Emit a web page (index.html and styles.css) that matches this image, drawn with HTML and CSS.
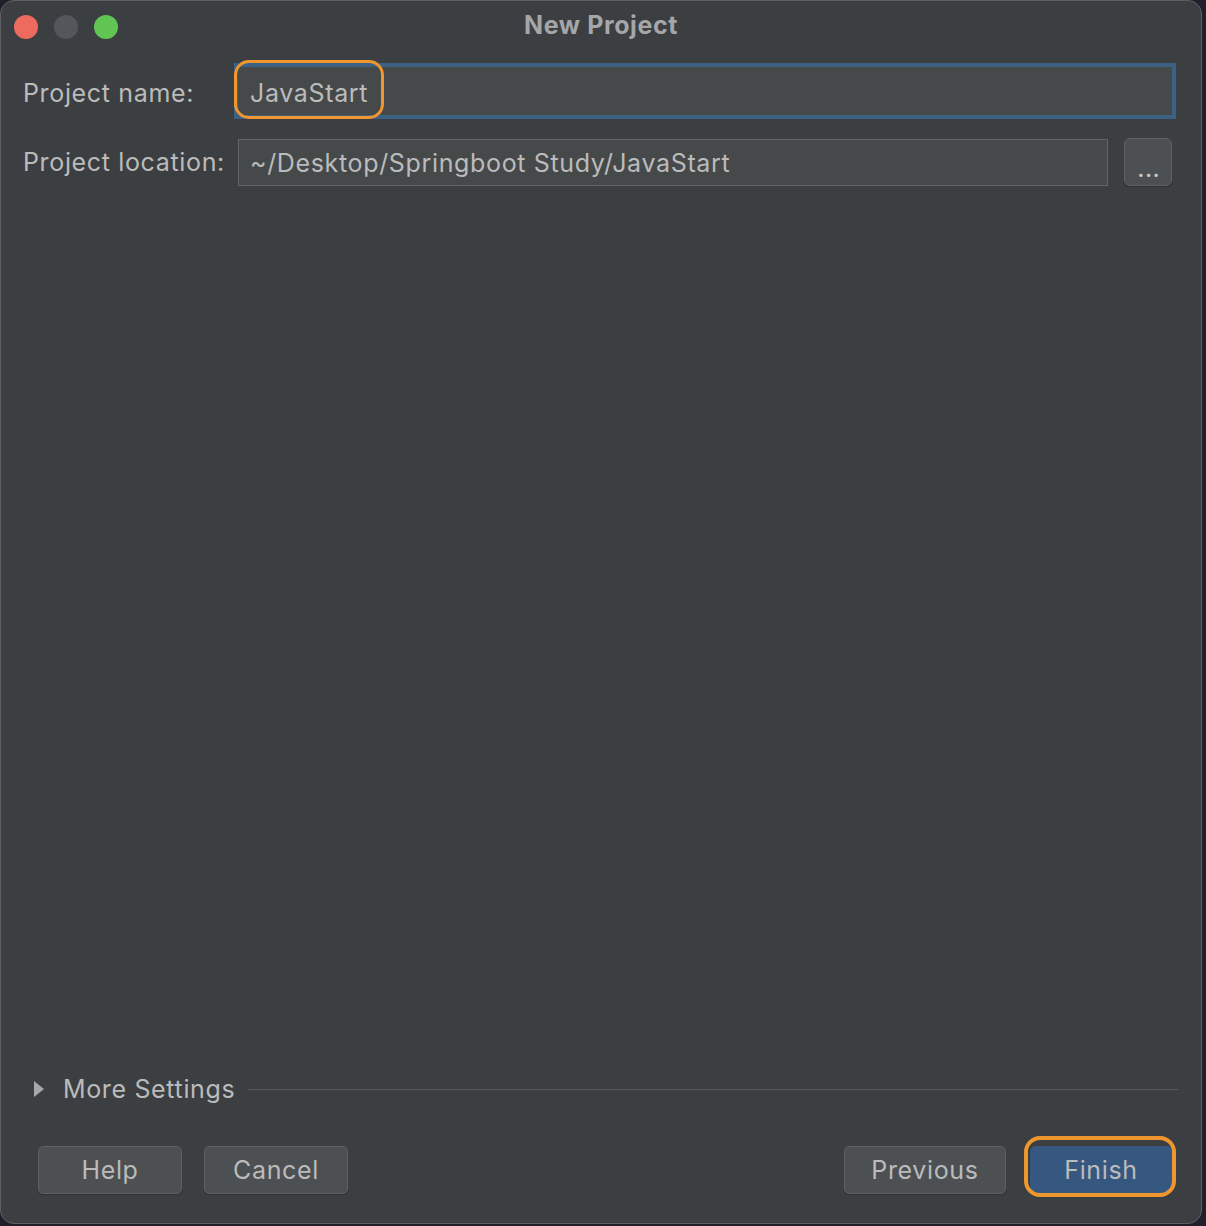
FILE: index.html
```html
<!DOCTYPE html>
<html>
<head>
<meta charset="UTF-8">
<title>New Project</title>
<link rel="stylesheet" href="styles.css">
</head>
<body>
	<div class="window">
		<div class="titlebar">
			<div class="lights">
				<span class="light close"></span>
				<span class="light idle"></span>
				<span class="light zoom"></span>
			</div>
			<div class="title">New Project</div>
		</div>
		<div class="form">
			<label class="label first">Project name:</label>
			<div class="field name">
				<span>JavaStart</span>
				<div class="mark"></div>
			</div>
			<label class="label">Project location:</label>
			<div class="location">
				<div class="field path"><span>~/Desktop/Springboot Study/JavaStart</span></div>
				<button class="browse">...</button>
			</div>
		</div>
		<div class="spacer"></div>
		<div class="more">
			<span class="arrow"></span>
			<span class="more-text">More Settings</span>
			<span class="rule"></span>
		</div>
		<div class="buttons">
			<button class="btn">Help</button>
			<button class="btn">Cancel</button>
			<div class="fill"></div>
			<button class="btn prev">Previous</button>
			<button class="btn finish">Finish</button>
		</div>
	</div>
</body>
</html>
```

FILE: styles.css
```css
:root { --back: #3c3f41; --field: #45494a; --btn: #4c5052; --front: #bbbbbb; --ring: #f0962e; --focus: #3d6185; }
html, body { margin: 0; height: 100%; }
body { background: #221f2d; font-family: Inter, "Noto Sans", sans-serif; color: var(--front); }
.window { box-sizing: border-box; width: 1202px; height: 1224px; background: var(--back); border: 1px solid #5d5f62; border-radius: 14px; display: flex; flex-direction: column; position: relative; }
.titlebar { height: 50px; display: flex; align-items: center; position: relative; }
.lights { display: flex; gap: 16px; padding-left: 13px; padding-top: 1px; }
.light { width: 24px; height: 24px; border-radius: 50%; display: block; }
.close { background: #ec6a5e; }
.idle { background: #53565a; }
.zoom { background: #61c554; }
.title { position: absolute; left: 0; right: 0; top: 9px; text-align: center; font-weight: 700; font-size: 25px; letter-spacing: 0.6px; color: #a4a6a9; }
.form { display: grid; grid-template-columns: 211px 1fr; grid-template-rows: 56px 48px; row-gap: 19px; padding: 12px 25px 0 22px; align-items: center; }
.label { font-size: 25px; letter-spacing: 0.65px; }
.label.first { padding-top: 3px; }
.field { box-sizing: border-box; background: var(--field); display: flex; align-items: center; font-size: 25px; letter-spacing: 0.65px; }
.name { height: 56px; border: 4px solid var(--focus); padding-left: 12px; padding-top: 3px; position: relative; }
.mark { position: absolute; left: -4px; top: -7px; width: 150px; height: 59px; box-sizing: border-box; border: 3px solid var(--ring); border-radius: 15px; }
.location { display: flex; gap: 16px; align-items: center; padding: 0 4px; }
.path { flex: 1; height: 47px; border: 1px solid #646464; padding-left: 11px; padding-top: 1px; }
.browse { width: 48px; height: 48px; border-radius: 6px; background: var(--btn); border: 1px solid #5e6162; color: #c8c8c8; font-size: 20px; font-weight: 700; letter-spacing: 1px; padding: 16px 0 0 2px; box-shadow: 0 1px 1px #2e3031; font-family: inherit; }
.spacer { flex: 1; }
.more { display: flex; align-items: center; padding: 0 23px 0 33px; height: 30px; }
.arrow { width: 0; height: 0; border-top: 8px solid transparent; border-bottom: 8px solid transparent; border-left: 10px solid #a8a8a8; margin-right: 19px; }
.more-text { font-size: 25px; letter-spacing: 0.65px; }
.rule { flex: 1; height: 1px; background: #575a5c; margin-left: 13px; }
.buttons { display: flex; gap: 22px; padding: 42px 29px 29px 37px; align-items: center; }
.fill { flex: 1; }
.btn { box-sizing: border-box; height: 48px; width: 144px; background: var(--btn); border: 1px solid #5e6162; border-radius: 5px; color: var(--front); font-family: inherit; font-size: 25px; letter-spacing: 0.65px; padding: 0; box-shadow: 0 1px 1px #2e3031; }
.prev { width: 162px; }
.finish { width: 142px; background: #365880; border-color: #365880; position: relative; margin-left: 2px; }
.finish::after { content: ""; position: absolute; left: -7px; right: -5px; top: -11px; bottom: -4px; border: 4px solid var(--ring); border-radius: 16px; }
```
